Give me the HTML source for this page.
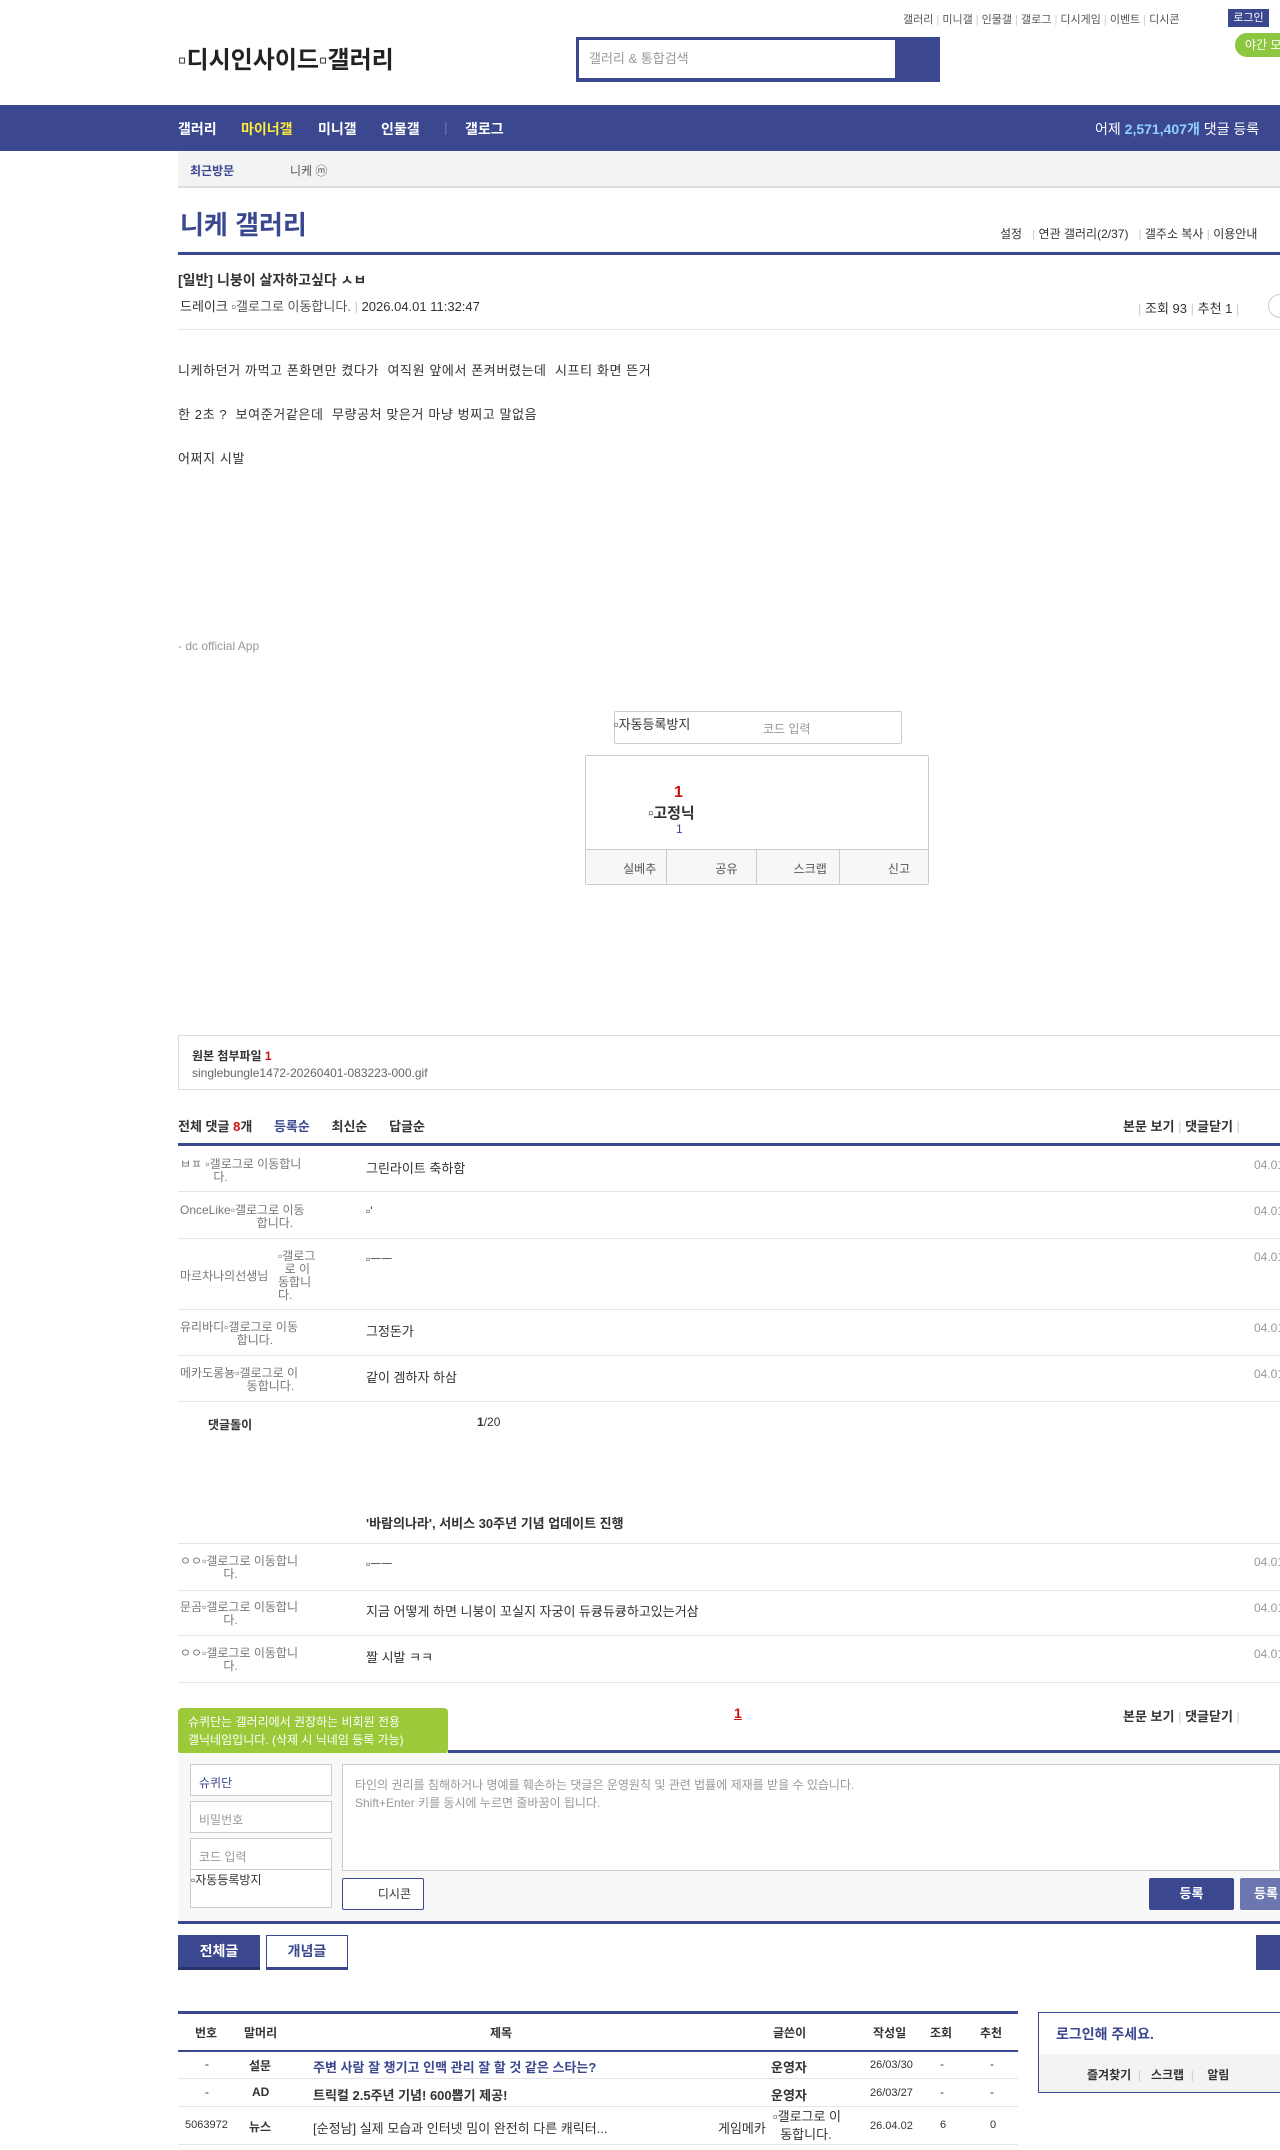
<!DOCTYPE html>
<html><head><meta charset="utf-8">
<style>
*{margin:0;padding:0;box-sizing:border-box}
html,body{width:1280px;height:2150px;overflow:hidden;background:#fff}
body{font-family:"Liberation Sans","Noto Sans CJK KR",sans-serif;color:#333;font-size:13px;position:relative}
.a{position:absolute;white-space:nowrap}
.blue{color:#3b4890}
.line{position:absolute;left:178px;right:0;height:1px;background:#e5e5e5}
.b{font-weight:bold}
.g{color:#777}
.n{position:absolute;top:119px;font-size:14px;font-weight:bold;color:#fff}
.bt{letter-spacing:0.6px}
</style></head><body>
<!-- top links -->
<div class="a" style="top:11px;left:903px;font-size:11px;color:#555">갤러리 <span style="color:#ccc">|</span> 미니갤 <span style="color:#ccc">|</span> 인물갤 <span style="color:#ccc">|</span> 갤로그 <span style="color:#ccc">|</span> 디시게임 <span style="color:#ccc">|</span> 이벤트 <span style="color:#ccc">|</span> 디시콘</div>
<div class="a" style="top:9px;left:1228px;width:41px;height:18px;background:#3b4890;color:#fff;font-size:11px;text-align:center;line-height:18px">로그인</div>
<div class="a" style="top:33px;left:1235px;width:60px;height:24px;background:#8dc63f;border-radius:12px;color:#fff;font-size:12px;line-height:24px;padding-left:10px">야간 모드</div>
<div class="a" style="top:40px;left:178px;font-size:24px;color:#222;font-weight:bold">▫디시인사이드▫갤러리</div>
<div class="a" style="top:37px;left:576px;width:364px;height:45px;background:#3b4890"></div>
<div class="a" style="top:40px;left:579px;width:316px;height:38px;background:#fff;color:#999;font-size:13px;line-height:38px;padding-left:10px">갤러리 &amp; 통합검색</div>
<!-- nav -->
<div class="a" style="top:105px;left:0;width:1280px;height:46px;background:#3b4890"></div>
<div class="n" style="left:178px">갤러리</div>
<div class="n" style="left:241px;color:#ffeb3b">마이너갤</div>
<div class="n" style="left:318px">미니갤</div>
<div class="n" style="left:381px">인물갤</div>
<div class="n" style="left:444px;color:#6a75b0;font-weight:normal">|</div>
<div class="n" style="left:465px">갤로그</div>
<div class="a" style="top:119px;left:1095px;font-size:14px;color:#fff">어제 <b style="color:#8fd0ff">2,571,407개</b> 댓글 등록</div>
<!-- recent -->
<div class="a" style="top:151px;left:178px;width:1102px;height:37px;background:#f3f3f3;border-bottom:2px solid #ddd"></div>
<div class="a b" style="top:162px;left:190px;font-size:12px;color:#3b4890">최근방문</div>
<div class="a" style="top:162px;left:290px;font-size:12px;color:#555">니케 ⓜ</div>
<!-- title -->
<div class="a b" style="top:205px;left:180px;font-size:26px;color:#3b4890">니케 갤러리</div>
<div class="a" style="top:225px;left:1000px;font-size:12px;color:#333">설정 &nbsp;&nbsp;<span style="color:#ccc">|</span> 연관 갤러리(2/37) &nbsp;&nbsp;<span style="color:#ccc">|</span> 갤주소 복사 <span style="color:#ccc">|</span> 이용안내</div>
<div class="a" style="top:252px;left:178px;width:1102px;height:3px;background:#3b4890"></div>
<div class="a b" style="top:270px;left:178px;font-size:14px;color:#333">[일반] 니붕이 살자하고싶다 ㅅㅂ</div>
<div class="a" style="top:296px;left:180px;font-size:13px;color:#333">드레이크 <span style="color:#555">▫갤로그로 이동합니다.</span> <span style="color:#ccc">|</span> 2026.04.01 11:32:47</div>
<div class="a" style="top:298px;left:1138px;font-size:13px"><span style="color:#ccc">|</span> 조회 93 <span style="color:#ccc">|</span> 추천 1 <span style="color:#ccc">|</span></div>
<div class="a" style="top:294px;left:1268px;width:24px;height:24px;border:1px solid #ccc;border-radius:12px"></div>
<div class="line" style="top:329px"></div>
<div class="a bt" style="top:360px;left:178px;font-size:13px">니케하던거 까먹고 폰화면만 켰다가&nbsp; 여직원 앞에서 폰켜버렸는데&nbsp; 시프티 화면 뜬거</div>
<div class="a bt" style="top:404px;left:178px;font-size:13px">한 2초 ? &nbsp;보여준거같은데&nbsp; 무량공처 맞은거 마냥 벙찌고 말없음</div>
<div class="a bt" style="top:448px;left:178px;font-size:13px">어쩌지 시발</div>
<div class="a" style="top:639px;left:178px;font-size:12px;color:#999">- dc official App</div>
<!-- captcha -->
<div class="a" style="top:711px;left:614px;width:288px;height:33px;border:1px solid #ccc;border-radius:2px"></div>
<div class="a" style="top:714px;left:614px;font-size:13px">▫자동등록방지</div>
<div class="a" style="top:720px;left:763px;font-size:12px;color:#999">코드 입력</div>
<div class="a" style="top:755px;left:585px;width:344px;height:130px;border:1px solid #ccc;border-radius:2px"></div>
<div class="a b" style="top:784px;left:674px;font-size:16px;color:#c11">1</div>
<div class="a b" style="top:802px;left:648px;font-size:15px;color:#333">▫고정닉</div>
<div class="a" style="top:822px;left:676px;font-size:12px;color:#3b4890">1</div>
<div class="a" style="top:849px;left:586px;width:342px;height:35px;background:#f7f7f7;border-top:1px solid #ccc;display:flex">
<div style="flex:1;border-right:1px solid #ccc;text-align:right;padding:10px 10px 0 0;font-size:12px;color:#555">실베추</div>
<div style="flex:1;border-right:1px solid #ccc;text-align:right;padding:10px 18px 0 0;font-size:12px;color:#555">공유</div>
<div style="flex:1;border-right:1px solid #ccc;text-align:right;padding:10px 12px 0 0;font-size:12px;color:#555">스크랩</div>
<div style="flex:1;text-align:right;padding:10px 18px 0 0;font-size:12px;color:#555">신고</div></div>
<!-- attach -->
<div class="a" style="top:1035px;left:178px;width:1102px;height:55px;border:1px solid #ddd;border-right:none"></div>
<div class="a b" style="top:1047px;left:192px;font-size:12px">원본 첨부파일 <span style="color:#c11">1</span></div>
<div class="a" style="top:1066px;left:192px;font-size:12px;color:#666">singlebungle1472-20260401-083223-000.gif</div>
<!-- comments -->
<div class="a b" style="top:1116px;left:178px;font-size:13px">전체 댓글 <span style="color:#c11">8</span>개 &nbsp;&nbsp;&nbsp;&nbsp;&nbsp;<span class="blue">등록순</span> &nbsp;&nbsp;&nbsp;&nbsp;&nbsp;최신순 &nbsp;&nbsp;&nbsp;&nbsp;&nbsp;답글순</div>
<div class="a b" style="top:1116px;left:1123px;font-size:13px">본문 보기 <span style="color:#ccc;font-weight:normal">|</span> 댓글닫기 <span style="color:#ccc;font-weight:normal">|</span></div>
<div class="a" style="top:1143px;left:178px;width:1102px;height:3px;background:#3b4890"></div>
<div class="a" style="top:1158px;left:180px;font-size:12px;color:#777;line-height:13px">ㅂㅍ ▫갤로그로 이동합니<br>&nbsp;&nbsp;&nbsp;&nbsp;&nbsp;&nbsp;&nbsp;&nbsp;&nbsp;&nbsp;다.</div>
<div class="a" style="top:1158px;left:366px;font-size:13px">그린라이트 축하함</div>
<div class="a" style="top:1158px;left:1254px;font-size:12px;color:#999">04.01</div>
<div class="line" style="top:1191px"></div>
<div class="a" style="top:1204px;left:180px;font-size:12px;color:#777;line-height:13px">OnceLike▫갤로그로 이동<br>&nbsp;&nbsp;&nbsp;&nbsp;&nbsp;&nbsp;&nbsp;&nbsp;&nbsp;&nbsp;&nbsp;&nbsp;&nbsp;&nbsp;&nbsp;&nbsp;&nbsp;&nbsp;&nbsp;&nbsp;&nbsp;&nbsp;&nbsp;합니다.</div>
<div class="a" style="top:1204px;left:366px;font-size:12px">▫'</div>
<div class="a" style="top:1204px;left:1254px;font-size:12px;color:#999">04.01</div>
<div class="line" style="top:1238px"></div>
<div class="a" style="top:1250px;left:278px;font-size:12px;color:#777;line-height:13px">▫갤로그<br>&nbsp;&nbsp;로 이<br>동합니<br>다.</div>
<div class="a" style="top:1267px;left:180px;font-size:12px;color:#777">마르차나의선생님</div>
<div class="a" style="top:1250px;left:366px;font-size:12px">▫ᅳᅳ</div>
<div class="a" style="top:1250px;left:1254px;font-size:12px;color:#999">04.01</div>
<div class="line" style="top:1309px"></div>
<div class="a" style="top:1321px;left:180px;font-size:12px;color:#777;line-height:13px">유리바디▫갤로그로 이동<br>&nbsp;&nbsp;&nbsp;&nbsp;&nbsp;&nbsp;&nbsp;&nbsp;&nbsp;&nbsp;&nbsp;&nbsp;&nbsp;&nbsp;&nbsp;&nbsp;&nbsp;합니다.</div>
<div class="a" style="top:1321px;left:366px;font-size:13px">그정돈가</div>
<div class="a" style="top:1321px;left:1254px;font-size:12px;color:#999">04.01</div>
<div class="line" style="top:1355px"></div>
<div class="a" style="top:1367px;left:180px;font-size:12px;color:#777;line-height:13px">메카도롱뇽▫갤로그로 이<br>&nbsp;&nbsp;&nbsp;&nbsp;&nbsp;&nbsp;&nbsp;&nbsp;&nbsp;&nbsp;&nbsp;&nbsp;&nbsp;&nbsp;&nbsp;&nbsp;&nbsp;&nbsp;&nbsp;&nbsp;동합니다.</div>
<div class="a" style="top:1367px;left:366px;font-size:13px">같이 겜하자 하삼</div>
<div class="a" style="top:1367px;left:1254px;font-size:12px;color:#999">04.01</div>
<div class="line" style="top:1401px"></div>
<div class="a b" style="top:1416px;left:208px;font-size:12px">댓글돌이</div>
<div class="a" style="top:1415px;left:477px;font-size:12px"><b>1</b>/20</div>
<div class="a b" style="top:1513px;left:366px;font-size:13px">'바람의나라', 서비스 30주년 기념 업데이트 진행</div>
<div class="line" style="top:1543px"></div>
<div class="a" style="top:1555px;left:180px;font-size:12px;color:#777;line-height:13px">ㅇㅇ▫갤로그로 이동합니<br>&nbsp;&nbsp;&nbsp;&nbsp;&nbsp;&nbsp;&nbsp;&nbsp;&nbsp;&nbsp;&nbsp;&nbsp;&nbsp;다.</div>
<div class="a" style="top:1555px;left:366px;font-size:12px">▫ᅳᅳ</div>
<div class="a" style="top:1555px;left:1254px;font-size:12px;color:#999">04.01</div>
<div class="line" style="top:1590px"></div>
<div class="a" style="top:1601px;left:180px;font-size:12px;color:#777;line-height:13px">문곰▫갤로그로 이동합니<br>&nbsp;&nbsp;&nbsp;&nbsp;&nbsp;&nbsp;&nbsp;&nbsp;&nbsp;&nbsp;&nbsp;&nbsp;&nbsp;다.</div>
<div class="a" style="top:1601px;left:366px;font-size:13px">지금 어떻게 하면 니붕이 꼬실지 자궁이 듀큥듀큥하고있는거삼</div>
<div class="a" style="top:1601px;left:1254px;font-size:12px;color:#999">04.01</div>
<div class="line" style="top:1635px"></div>
<div class="a" style="top:1647px;left:180px;font-size:12px;color:#777;line-height:13px">ㅇㅇ▫갤로그로 이동합니<br>&nbsp;&nbsp;&nbsp;&nbsp;&nbsp;&nbsp;&nbsp;&nbsp;&nbsp;&nbsp;&nbsp;&nbsp;&nbsp;다.</div>
<div class="a" style="top:1647px;left:366px;font-size:13px">짤 시발 ㅋㅋ</div>
<div class="a" style="top:1647px;left:1254px;font-size:12px;color:#999">04.01</div>
<div class="line" style="top:1682px"></div>
<!-- write -->
<div class="a" style="top:1708px;left:178px;width:270px;height:46px;background:#9bc93a;border-radius:4px;color:#fff;font-size:12px;line-height:18px;padding:5px 10px">슈퀴단는 갤러리에서 권장하는 비회원 전용<br>갤닉네임입니다. (삭제 시 닉네임 등록 가능)</div>
<div class="a" style="top:1753px;left:211px;width:0;height:0;border-left:5px solid transparent;border-right:5px solid transparent;border-top:8px solid #9bc93a"></div>
<div class="a" style="top:1705px;left:734px;font-size:14px;color:#c11;text-decoration:underline;font-weight:bold">1</div>
<div class="a b" style="top:1706px;left:1123px;font-size:13px">본문 보기 <span style="color:#ccc;font-weight:normal">|</span> 댓글닫기 <span style="color:#ccc;font-weight:normal">|</span></div>
<div class="a" style="top:1750px;left:448px;right:0;height:3px;background:#3b4890"></div>
<div class="a" style="top:1753px;left:178px;width:1102px;height:168px;background:#f8f8f8"></div>
<div class="a" style="top:1764px;left:190px;width:142px;height:32px;background:#fff;border:1px solid #ccc;padding:9px 8px;font-size:12px;color:#3b4890">슈퀴단</div>
<div class="a" style="top:1801px;left:190px;width:142px;height:32px;background:#fff;border:1px solid #ccc;padding:9px 8px;font-size:12px;color:#999">비밀번호</div>
<div class="a" style="top:1838px;left:190px;width:142px;height:70px;background:#fff;border:1px solid #ccc;padding:9px 8px;font-size:12px;color:#999">코드 입력</div>
<div class="a" style="top:1869px;left:191px;width:140px;height:1px;background:#ccc"></div>
<div class="a" style="top:1871px;left:191px;font-size:12px">▫자동등록방지</div>
<div class="a" style="top:1764px;left:342px;width:938px;height:107px;background:#fff;border:1px solid #ccc;padding:11px 12px;font-size:12px;color:#999;line-height:18px">타인의 권리를 침해하거나 명예를 훼손하는 댓글은 운영원칙 및 관련 법률에 제재를 받을 수 있습니다.<br>Shift+Enter 키를 동시에 누르면 줄바꿈이 됩니다.</div>
<div class="a" style="top:1878px;left:342px;width:82px;height:32px;background:#fff;border:1px solid #3b4890;border-radius:2px;font-size:12px;line-height:30px;text-align:right;padding-right:12px">디시콘</div>
<div class="a" style="top:1878px;left:1149px;width:85px;height:32px;background:#3b4890;color:#fff;font-size:13px;font-weight:bold;line-height:32px;text-align:center;border-radius:2px">등록</div>
<div class="a" style="top:1878px;left:1240px;width:60px;height:32px;background:#6c76b0;color:#fff;font-size:13px;font-weight:bold;line-height:32px;padding-left:14px;border-radius:2px">등록</div>
<div class="a" style="top:1921px;left:178px;right:0;height:3px;background:#3b4890"></div>
<!-- list buttons -->
<div class="a" style="top:1935px;left:178px;width:82px;height:35px;background:#3b4890;color:#fff;font-size:14px;font-weight:bold;line-height:33px;text-align:center;border-bottom:3px solid #29336e">전체글</div>
<div class="a" style="top:1935px;left:266px;width:82px;height:35px;background:#fff;border:1px solid #3b4890;border-bottom:3px solid #3b4890;color:#3b4890;font-size:14px;font-weight:bold;line-height:31px;text-align:center">개념글</div>
<div class="a" style="top:1935px;left:1256px;width:40px;height:35px;background:#3b4890"></div>
<!-- table -->
<div class="a" style="top:2011px;left:178px;width:840px;height:3px;background:#3b4890"></div>
<div class="a b" style="top:2024px;left:195px;font-size:12px">번호</div>
<div class="a b" style="top:2024px;left:244px;font-size:12px">말머리</div>
<div class="a b" style="top:2024px;left:490px;font-size:12px">제목</div>
<div class="a b" style="top:2024px;left:773px;font-size:12px">글쓴이</div>
<div class="a b" style="top:2024px;left:873px;font-size:12px">작성일</div>
<div class="a b" style="top:2024px;left:930px;font-size:12px">조회</div>
<div class="a b" style="top:2024px;left:980px;font-size:12px">추천</div>
<div class="a" style="top:2050px;left:178px;width:840px;height:2px;background:#3b4890"></div>
<div class="a" style="top:2057px;left:205px;font-size:12px">-</div>
<div class="a b" style="top:2057px;left:249px;font-size:12px">설문</div>
<div class="a b blue" style="top:2057px;left:313px;font-size:13px">주변 사람 잘 챙기고 인맥 관리 잘 할 것 같은 스타는?</div>
<div class="a b" style="top:2057px;left:771px;font-size:13px">운영자</div>
<div class="a" style="top:2059px;left:870px;font-size:11px">26/03/30</div>
<div class="a" style="top:2057px;left:940px;font-size:12px">-</div><div class="a" style="top:2057px;left:990px;font-size:12px">-</div>
<div class="a" style="top:2078px;left:178px;width:840px;height:1px;background:#e5e5e5"></div>
<div class="a" style="top:2085px;left:205px;font-size:12px">-</div>
<div class="a b" style="top:2085px;left:252px;font-size:12px">AD</div>
<div class="a b" style="top:2085px;left:313px;font-size:13px">트릭컬 2.5주년 기념! 600뽑기 제공!</div>
<div class="a b" style="top:2085px;left:771px;font-size:13px">운영자</div>
<div class="a" style="top:2087px;left:870px;font-size:11px">26/03/27</div>
<div class="a" style="top:2085px;left:940px;font-size:12px">-</div><div class="a" style="top:2085px;left:990px;font-size:12px">-</div>
<div class="a" style="top:2106px;left:178px;width:840px;height:1px;background:#e5e5e5"></div>
<div class="a" style="top:2119px;left:185px;font-size:11px">5063972</div>
<div class="a b" style="top:2118px;left:249px;font-size:12px">뉴스</div>
<div class="a" style="top:2118px;left:313px;font-size:13px">[순정남] 실제 모습과 인터넷 밈이 완전히 다른 캐릭터...</div>
<div class="a" style="top:2118px;left:718px;font-size:13px">게임메카</div>
<div class="a" style="top:2108px;left:773px;font-size:13px;line-height:18px">▫갤로그로 이<br>&nbsp;&nbsp;동합니다.</div>
<div class="a" style="top:2120px;left:870px;font-size:11px">26.04.02</div>
<div class="a" style="top:2119px;left:940px;font-size:11px">6</div><div class="a" style="top:2119px;left:990px;font-size:11px">0</div>
<div class="a" style="top:2144px;left:178px;width:840px;height:1px;background:#e5e5e5"></div>
<!-- login box -->
<div class="a" style="top:2012px;left:1038px;width:260px;height:81px;border:1px solid #3b4890;border-right:none"></div>
<div class="a b" style="top:2024px;left:1056px;font-size:14px;color:#3b4890">로그인해 주세요.</div>
<div class="a" style="top:2054px;left:1039px;width:250px;height:38px;background:#f3f3f3"></div>
<div class="a b" style="top:2066px;left:1087px;font-size:12px">즐겨찾기 <span style="color:#ccc;font-weight:normal">&nbsp;|&nbsp;</span> &nbsp;스크랩 <span style="color:#ccc;font-weight:normal">&nbsp;|&nbsp;</span> &nbsp;&nbsp;알림</div>
</body></html>
